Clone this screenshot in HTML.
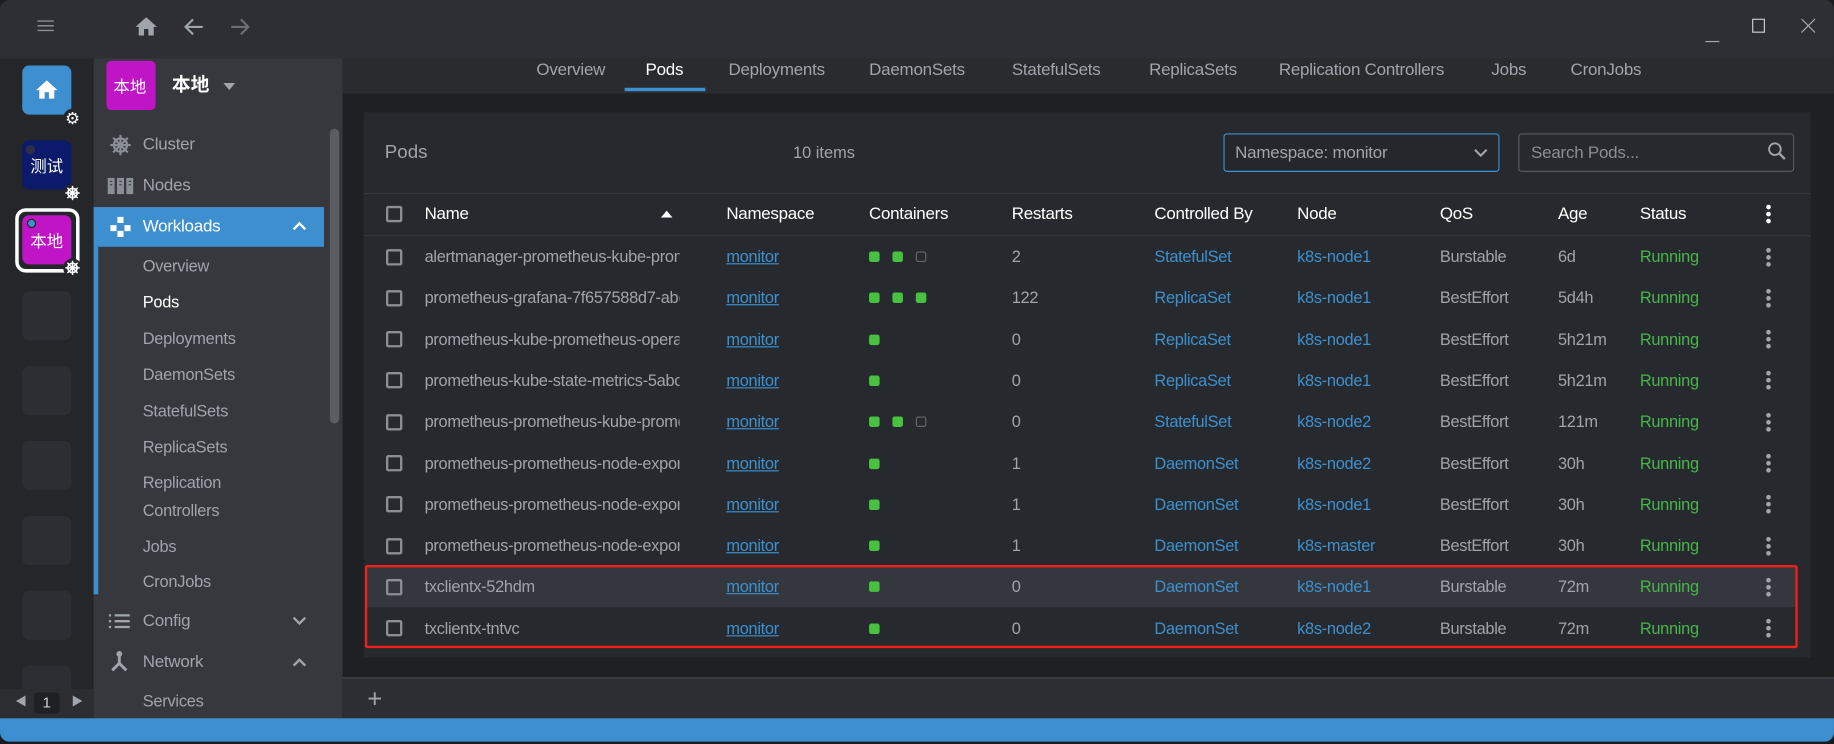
<!DOCTYPE html>
<html><head><meta charset="utf-8"><style>
*{box-sizing:border-box;margin:0;padding:0}
html,body{width:1834px;height:744px;overflow:hidden;background:#1b1c1f}
#w{position:absolute;left:0;top:0;width:1568px;height:636px;transform:scale(1.16964,1.16981);transform-origin:0 0;font-family:"Liberation Sans","Noto Sans CJK SC",sans-serif;font-size:14px;color:#a0a4ab}
.a{position:absolute}
.t{position:absolute;white-space:nowrap;line-height:20px;transform:translateY(-10px)}
.tile{position:absolute;width:42px;height:42px;border-radius:6px;background:#2c2e33}
.sb{left:122px;letter-spacing:-0.2px}
.row{position:absolute;left:312px;width:1236px;height:35.3px;letter-spacing:-0.25px}
.row .t{top:17.6px}
.cb{position:absolute;left:18px;top:11px;width:14px;height:14px;border:2px solid #8a8e95;border-radius:2px}
.g{display:inline-block;width:9px;height:9px;border-radius:2px;background:#48c040;margin-right:11px}
.e{display:inline-block;width:9px;height:9px;border-radius:2px;border:1px solid #666;margin-right:11px}
.lk{color:#3d90ce}
.u{text-decoration:underline}
.run{color:#48b54a}
.dots{position:absolute;left:1198px;top:10px;width:4px}
.dots i{display:block;width:4px;height:4px;border-radius:2px;background:#a0a4ab;margin-bottom:2px}
.tab{position:absolute;top:60px;transform:translate(-50%,-10px);line-height:20px;font-size:14.5px;letter-spacing:-0.2px}
.badge{position:absolute;width:16px;height:16px;border-radius:8px;background:#242629}
</style></head><body><div id="w">
<svg width="0" height="0" style="position:absolute"><defs><g id="wheel"><circle cx="8" cy="8" r="4.5" fill="none" stroke-width="1.6"/><circle cx="8" cy="8" r="1.5"/><path d="M8 1v14M1 8h14M3 3l10 10M13 3L3 13" stroke-width="1.4"/></g></defs></svg>
<div class="a" style="left:0;top:0;width:1568px;height:50px;background:#2d2f34;border-radius:8px 8px 0 0"></div>
<svg class="a" style="left:30px;top:14px" width="20" height="16"><path d="M2 4h14M2 8h14M2 12h14" stroke="#8a8e95" stroke-width="1.2"/></svg>
<svg class="a" style="left:114px;top:12px" width="22" height="22" viewBox="0 0 24 24"><path d="M10 20v-6h4v6h5v-8h3L12 3 2 12h3v8z" fill="#a0a4ab"/></svg>
<svg class="a" style="left:155px;top:12px" width="22" height="22" viewBox="0 0 24 24"><path d="M20 12H5M11 5l-7 7 7 7" stroke="#a0a4ab" stroke-width="2" fill="none"/></svg>
<svg class="a" style="left:194px;top:12px" width="22" height="22" viewBox="0 0 24 24"><path d="M4 12h15M13 5l7 7-7 7" stroke="#6a6e75" stroke-width="2" fill="none"/></svg>
<div class="a" style="left:1458px;top:35px;width:12px;height:1px;background:#aaa"></div>
<div class="a" style="left:1498px;top:16px;width:11px;height:12px;border:1.5px solid #ccc"></div>
<svg class="a" style="left:1540px;top:16px" width="12" height="12"><path d="M0 0L12 12M12 0L0 12" stroke="#aaa" stroke-width="1"/></svg>
<div class="a" style="left:0;top:50px;width:80px;height:564px;background:#242629"></div>
<div class="tile" style="left:19px;top:56px;background:#3d8fd0"></div>
<svg class="a" style="left:29px;top:66px" width="22" height="22" viewBox="0 0 24 24"><path d="M10 20v-6h4v6h5v-8h3L12 3 2 12h3v8z" fill="#fff"/></svg>
<div class="badge" style="left:54px;top:93px;color:#fff;font-size:14px;text-align:center;line-height:16px">⚙</div>
<div class="tile" style="left:19px;top:120px;background:#0b1a6b"></div>
<div class="a" style="left:22px;top:124px;width:8px;height:8px;border-radius:4px;background:#2a2f45"></div>
<div class="t" style="left:26px;top:142px;color:#fff;font-size:14px">测试</div>
<div class="badge" style="left:54px;top:157px"></div>
<svg class="a" style="left:55px;top:158px" width="14" height="14" viewBox="0 0 16 16" stroke="#fff" fill="#fff"><use href="#wheel"/></svg>
<div class="a" style="left:13px;top:178px;width:55px;height:55px;border:3px solid #fff;border-radius:9px"></div>
<div class="tile" style="left:19px;top:184px;background:#c015c6"></div>
<div class="a" style="left:23px;top:187px;width:8px;height:8px;border-radius:4px;background:#3d8fd0;border:1px solid #222"></div>
<div class="t" style="left:26px;top:206px;color:#fff;font-size:14px">本地</div>
<div class="badge" style="left:54px;top:221px"></div>
<svg class="a" style="left:55px;top:222px" width="14" height="14" viewBox="0 0 16 16" stroke="#fff" fill="#fff"><use href="#wheel"/></svg>
<div class="tile" style="top:249px;left:19px"></div><div class="tile" style="top:313px;left:19px"></div><div class="tile" style="top:377px;left:19px"></div><div class="tile" style="top:441px;left:19px"></div><div class="tile" style="top:505px;left:19px"></div>
<div class="tile" style="top:569px;left:19px;height:20px;border-radius:6px 6px 0 0"></div>
<div class="a" style="left:0;top:589px;width:80px;height:25px;background:#2b2d31"></div>
<div class="t" style="left:13px;top:601px;font-size:10px">◀</div>
<div class="a" style="left:29px;top:592px;width:22px;height:18px;background:#1e2023;border-radius:3px;color:#ccc;text-align:center;line-height:18px;font-size:13px">1</div>
<div class="t" style="left:61px;top:601px;font-size:10px">▶</div>
<div class="a" style="left:80px;top:50px;width:213px;height:564px;background:#36383e"></div>
<div class="a" style="left:91px;top:52px;width:42px;height:42px;background:#c015c6;border-radius:4px"></div>
<div class="t" style="left:97px;top:74px;color:#fff;font-size:14px">本地</div>
<div class="t" style="left:147px;top:74px;color:#fff;font-size:16px;font-weight:bold">本地</div>
<svg class="a" style="left:191px;top:71px" width="10" height="6"><path d="M0 0h10L5 6z" fill="#a0a4ab"/></svg>
<div class="a" style="left:282px;top:110px;width:8px;height:252px;border-radius:4px;background:#5b5d62"></div>
<svg class="a" style="left:93px;top:114px" width="20" height="20" viewBox="0 0 16 16" stroke="#8a8e95" fill="#8a8e95"><use href="#wheel"/></svg>
<div class="t" style="left:122px;top:124px;font-size:14.5px;letter-spacing:-0.2px">Cluster</div>
<svg class="a" style="left:92px;top:152px" width="22" height="14"><rect x="0" y="0" width="6" height="14" fill="#8a8e95"/><rect x="8" y="0" width="6" height="14" fill="#8a8e95"/><rect x="16" y="0" width="6" height="14" fill="#8a8e95"/><path d="M2 3h2M2 6h2M10 3h2M10 6h2M18 3h2M18 6h2" stroke="#36383e"/></svg>
<div class="t" style="left:122px;top:159px;font-size:14.5px;letter-spacing:-0.2px">Nodes</div>
<div class="a" style="left:80px;top:177px;width:197px;height:34px;background:#3d8fd0"></div>
<svg class="a" style="left:93px;top:184px" width="20" height="20" viewBox="0 0 20 20"><path d="M7 1h6v6H7zM1 8h6v6H1zM13 8h6v6h-6zM7 13h6v6H7z" fill="#fff" stroke="#3d8fd0" stroke-width=".8"/></svg>
<div class="t" style="left:122px;top:194px;font-size:14.5px;color:#fff;letter-spacing:-0.2px">Workloads</div>
<svg class="a" style="left:250px;top:189px" width="12" height="8"><path d="M1 7l5-5 5 5" stroke="#fff" stroke-width="2" fill="none"/></svg>
<div class="a" style="left:80px;top:211px;width:4px;height:297px;background:#3d8fd0"></div>
<div class="t sb" style="top:227px">Overview</div>
<div class="t sb" style="top:258px;color:#fff">Pods</div>
<div class="t sb" style="top:289px">Deployments</div>
<div class="t sb" style="top:320px">DaemonSets</div>
<div class="t sb" style="top:351px">StatefulSets</div>
<div class="t sb" style="top:382px">ReplicaSets</div>
<div class="t sb" style="top:412px">Replication</div>
<div class="t sb" style="top:436px">Controllers</div>
<div class="t sb" style="top:467px">Jobs</div>
<div class="t sb" style="top:497px">CronJobs</div>
<svg class="a" style="left:93px;top:525px" width="18" height="12"><path d="M0 1h2M0 6h2M0 11h2M5 1h13M5 6h13M5 11h13" stroke="#a0a4ab" stroke-width="2"/></svg>
<div class="t" style="left:122px;top:531px;font-size:14.5px;letter-spacing:-0.2px">Config</div>
<svg class="a" style="left:250px;top:527px" width="12" height="8"><path d="M1 1l5 5 5-5" stroke="#a0a4ab" stroke-width="2" fill="none"/></svg>
<svg class="a" style="left:93px;top:556px" width="18" height="20"><circle cx="9" cy="3" r="2.5" fill="#a0a4ab"/><path d="M9 5v6L3 17M9 11l6 6" stroke="#a0a4ab" stroke-width="2.5" fill="none"/></svg>
<div class="t" style="left:122px;top:566px;font-size:14.5px;letter-spacing:-0.2px">Network</div>
<svg class="a" style="left:250px;top:562px" width="12" height="8"><path d="M1 7l5-5 5 5" stroke="#a0a4ab" stroke-width="2" fill="none"/></svg>
<div class="t sb" style="top:599px">Services</div>
<div class="a" style="left:293px;top:50px;width:1275px;height:564px;background:#1e2023"></div>
<div class="a" style="left:293px;top:50px;width:1275px;height:30px;background:#292b2f"></div>
<div class="tab" style="left:488px">Overview</div>
<div class="tab" style="left:568px;color:#fff">Pods</div>
<div class="a" style="left:534px;top:75px;width:69px;height:3px;background:#3d8fd0"></div>
<div class="tab" style="left:664px">Deployments</div>
<div class="tab" style="left:784px">DaemonSets</div>
<div class="tab" style="left:903px">StatefulSets</div>
<div class="tab" style="left:1020px">ReplicaSets</div>
<div class="tab" style="left:1164px">Replication Controllers</div>
<div class="tab" style="left:1290px">Jobs</div>
<div class="tab" style="left:1373px">CronJobs</div>
<div class="a" style="left:311px;top:96px;width:1237px;height:466px;background:#262a2e"></div>
<div class="t" style="left:329px;top:131px;font-size:16px">Pods</div>
<div class="t" style="left:678px;top:130px;font-size:14px">10 items</div>
<div class="a" style="left:1046px;top:114px;width:236px;height:33px;border:1px solid #3d8fd0;border-radius:3px;background:#24272b"></div>
<div class="t" style="left:1056px;top:131px;font-size:14.5px;letter-spacing:-0.2px">Namespace: monitor</div>
<svg class="a" style="left:1260px;top:127px" width="12" height="8"><path d="M1 1l5 5 5-5" stroke="#a0a4ab" stroke-width="1.8" fill="none"/></svg>
<div class="a" style="left:1298px;top:114px;width:236px;height:33px;border:1px solid #555a60;border-radius:3px"></div>
<div class="t" style="left:1309px;top:131px;font-size:14.5px;color:#8a8e95;letter-spacing:-0.2px">Search Pods...</div>
<svg class="a" style="left:1511px;top:121px" width="16" height="16"><circle cx="6.5" cy="6.5" r="5" stroke="#a0a4ab" stroke-width="1.6" fill="none"/><path d="M10 10l5 5" stroke="#a0a4ab" stroke-width="2"/></svg>
<div class="a" style="left:311px;top:165px;width:1237px;height:1px;background:#353940"></div>
<div class="a" style="left:311px;top:201px;width:1237px;height:1px;background:#353940"></div>
<div class="row" style="top:165px;color:#fff;font-size:14.5px">
<div class="cb"></div><div class="t" style="left:51px">Name</div>
<svg class="a" style="left:253px;top:15px" width="10" height="6"><path d="M0 6h10L5 0z" fill="#fff"/></svg>
<div class="t" style="left:309px">Namespace</div><div class="t" style="left:431px">Containers</div><div class="t" style="left:553px">Restarts</div><div class="t" style="left:675px">Controlled By</div><div class="t" style="left:797px">Node</div><div class="t" style="left:919px">QoS</div><div class="t" style="left:1020px">Age</div><div class="t" style="left:1090px">Status</div>
<div class="dots"><i style="background:#fff"></i><i style="background:#fff"></i><i style="background:#fff"></i></div>
</div>
<div class="a" style="left:312px;top:484px;width:1224px;height:35px;background:#34373d"></div>
<div class="row" style="top:201.5px"><div class="cb"></div><div class="t" style="left:51px;width:218px;overflow:hidden">alertmanager-prometheus-kube-prometheus</div><div class="t lk u" style="left:309px">monitor</div><div class="t" style="left:431px"><i class="g"></i><i class="g"></i><i class="e"></i></div><div class="t" style="left:553px">2</div><div class="t lk" style="left:675px">StatefulSet</div><div class="t lk" style="left:797px">k8s-node1</div><div class="t" style="left:919px">Burstable</div><div class="t" style="left:1020px">6d</div><div class="t run" style="left:1090px">Running</div><div class="dots"><i></i><i></i><i></i></div></div>
<div class="row" style="top:236.8px"><div class="cb"></div><div class="t" style="left:51px;width:218px;overflow:hidden">prometheus-grafana-7f657588d7-abcde</div><div class="t lk u" style="left:309px">monitor</div><div class="t" style="left:431px"><i class="g"></i><i class="g"></i><i class="g"></i></div><div class="t" style="left:553px">122</div><div class="t lk" style="left:675px">ReplicaSet</div><div class="t lk" style="left:797px">k8s-node1</div><div class="t" style="left:919px">BestEffort</div><div class="t" style="left:1020px">5d4h</div><div class="t run" style="left:1090px">Running</div><div class="dots"><i></i><i></i><i></i></div></div>
<div class="row" style="top:272.1px"><div class="cb"></div><div class="t" style="left:51px;width:218px;overflow:hidden">prometheus-kube-prometheus-operator</div><div class="t lk u" style="left:309px">monitor</div><div class="t" style="left:431px"><i class="g"></i></div><div class="t" style="left:553px">0</div><div class="t lk" style="left:675px">ReplicaSet</div><div class="t lk" style="left:797px">k8s-node1</div><div class="t" style="left:919px">BestEffort</div><div class="t" style="left:1020px">5h21m</div><div class="t run" style="left:1090px">Running</div><div class="dots"><i></i><i></i><i></i></div></div>
<div class="row" style="top:307.4px"><div class="cb"></div><div class="t" style="left:51px;width:218px;overflow:hidden">prometheus-kube-state-metrics-5abc</div><div class="t lk u" style="left:309px">monitor</div><div class="t" style="left:431px"><i class="g"></i></div><div class="t" style="left:553px">0</div><div class="t lk" style="left:675px">ReplicaSet</div><div class="t lk" style="left:797px">k8s-node1</div><div class="t" style="left:919px">BestEffort</div><div class="t" style="left:1020px">5h21m</div><div class="t run" style="left:1090px">Running</div><div class="dots"><i></i><i></i><i></i></div></div>
<div class="row" style="top:342.7px"><div class="cb"></div><div class="t" style="left:51px;width:218px;overflow:hidden">prometheus-prometheus-kube-prometheus</div><div class="t lk u" style="left:309px">monitor</div><div class="t" style="left:431px"><i class="g"></i><i class="g"></i><i class="e"></i></div><div class="t" style="left:553px">0</div><div class="t lk" style="left:675px">StatefulSet</div><div class="t lk" style="left:797px">k8s-node2</div><div class="t" style="left:919px">BestEffort</div><div class="t" style="left:1020px">121m</div><div class="t run" style="left:1090px">Running</div><div class="dots"><i></i><i></i><i></i></div></div>
<div class="row" style="top:378px"><div class="cb"></div><div class="t" style="left:51px;width:218px;overflow:hidden">prometheus-prometheus-node-exporter</div><div class="t lk u" style="left:309px">monitor</div><div class="t" style="left:431px"><i class="g"></i></div><div class="t" style="left:553px">1</div><div class="t lk" style="left:675px">DaemonSet</div><div class="t lk" style="left:797px">k8s-node2</div><div class="t" style="left:919px">BestEffort</div><div class="t" style="left:1020px">30h</div><div class="t run" style="left:1090px">Running</div><div class="dots"><i></i><i></i><i></i></div></div>
<div class="row" style="top:413.3px"><div class="cb"></div><div class="t" style="left:51px;width:218px;overflow:hidden">prometheus-prometheus-node-exporter</div><div class="t lk u" style="left:309px">monitor</div><div class="t" style="left:431px"><i class="g"></i></div><div class="t" style="left:553px">1</div><div class="t lk" style="left:675px">DaemonSet</div><div class="t lk" style="left:797px">k8s-node1</div><div class="t" style="left:919px">BestEffort</div><div class="t" style="left:1020px">30h</div><div class="t run" style="left:1090px">Running</div><div class="dots"><i></i><i></i><i></i></div></div>
<div class="row" style="top:448.6px"><div class="cb"></div><div class="t" style="left:51px;width:218px;overflow:hidden">prometheus-prometheus-node-exporter</div><div class="t lk u" style="left:309px">monitor</div><div class="t" style="left:431px"><i class="g"></i></div><div class="t" style="left:553px">1</div><div class="t lk" style="left:675px">DaemonSet</div><div class="t lk" style="left:797px">k8s-master</div><div class="t" style="left:919px">BestEffort</div><div class="t" style="left:1020px">30h</div><div class="t run" style="left:1090px">Running</div><div class="dots"><i></i><i></i><i></i></div></div>
<div class="row" style="top:483.9px"><div class="cb"></div><div class="t" style="left:51px">txclientx-52hdm</div><div class="t lk u" style="left:309px">monitor</div><div class="t" style="left:431px"><i class="g"></i></div><div class="t" style="left:553px">0</div><div class="t lk" style="left:675px">DaemonSet</div><div class="t lk" style="left:797px">k8s-node1</div><div class="t" style="left:919px">Burstable</div><div class="t" style="left:1020px">72m</div><div class="t run" style="left:1090px">Running</div><div class="dots"><i></i><i></i><i></i></div></div>
<div class="row" style="top:519.2px"><div class="cb"></div><div class="t" style="left:51px">txclientx-tntvc</div><div class="t lk u" style="left:309px">monitor</div><div class="t" style="left:431px"><i class="g"></i></div><div class="t" style="left:553px">0</div><div class="t lk" style="left:675px">DaemonSet</div><div class="t lk" style="left:797px">k8s-node2</div><div class="t" style="left:919px">Burstable</div><div class="t" style="left:1020px">72m</div><div class="t run" style="left:1090px">Running</div><div class="dots"><i></i><i></i><i></i></div></div>
<div class="a" style="left:312px;top:483px;width:1225px;height:71px;border:2px solid #f0201a;border-radius:2px"></div>
<div class="a" style="left:293px;top:579px;width:1275px;height:35px;background:#2c2e33;border-top:1px solid #44474c"></div>
<div class="t" style="left:314px;top:598px;font-size:22px;color:#a0a4ab;font-weight:300">+</div>
<div class="a" style="left:0;top:614px;width:1568px;height:20px;background:#3d8fd0;border-radius:0 0 8px 8px"></div>
</div></body></html>
